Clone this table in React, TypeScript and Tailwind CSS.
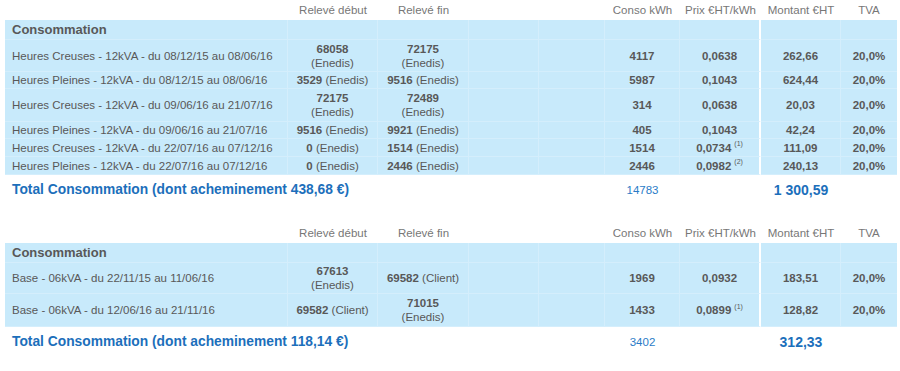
import React from "react";

interface Reading {
  value: string;
  src: string;
  stacked?: boolean;
}

interface Row {
  label: string;
  debut: Reading;
  fin: Reading;
  conso: string;
  prix: string;
  note?: string;
  montant: string;
  tva: string;
  height: string;
}

interface Section {
  rows: Row[];
  acheminement: string;
  totalConso: string;
  totalMontant: string;
}

const grid =
  "grid grid-cols-[283px_90px_91px_70px_66px_75px_81px_80px_56px]";

const sections: Section[] = [
  {
    acheminement: "438,68",
    totalConso: "14783",
    totalMontant: "1 300,59",
    rows: [
      {
        label: "Heures Creuses - 12kVA - du 08/12/15 au 08/06/16",
        debut: { value: "68058", src: "(Enedis)", stacked: true },
        fin: { value: "72175", src: "(Enedis)", stacked: true },
        conso: "4117",
        prix: "0,0638",
        montant: "262,66",
        tva: "20,0%",
        height: "h-[32px]",
      },
      {
        label: "Heures Pleines - 12kVA - du 08/12/15 au 08/06/16",
        debut: { value: "3529", src: "(Enedis)" },
        fin: { value: "9516", src: "(Enedis)" },
        conso: "5987",
        prix: "0,1043",
        montant: "624,44",
        tva: "20,0%",
        height: "h-[17px]",
      },
      {
        label: "Heures Creuses - 12kVA - du 09/06/16 au 21/07/16",
        debut: { value: "72175", src: "(Enedis)", stacked: true },
        fin: { value: "72489", src: "(Enedis)", stacked: true },
        conso: "314",
        prix: "0,0638",
        montant: "20,03",
        tva: "20,0%",
        height: "h-[33px]",
      },
      {
        label: "Heures Pleines - 12kVA - du 09/06/16 au 21/07/16",
        debut: { value: "9516", src: "(Enedis)" },
        fin: { value: "9921", src: "(Enedis)" },
        conso: "405",
        prix: "0,1043",
        montant: "42,24",
        tva: "20,0%",
        height: "h-[17px]",
      },
      {
        label: "Heures Creuses - 12kVA - du 22/07/16 au 07/12/16",
        debut: { value: "0", src: "(Enedis)" },
        fin: { value: "1514", src: "(Enedis)" },
        conso: "1514",
        prix: "0,0734",
        note: "(1)",
        montant: "111,09",
        tva: "20,0%",
        height: "h-[18px]",
      },
      {
        label: "Heures Pleines - 12kVA - du 22/07/16 au 07/12/16",
        debut: { value: "0", src: "(Enedis)" },
        fin: { value: "2446", src: "(Enedis)" },
        conso: "2446",
        prix: "0,0982",
        note: "(2)",
        montant: "240,13",
        tva: "20,0%",
        height: "h-[18px]",
      },
    ],
  },
  {
    acheminement: "118,14",
    totalConso: "3402",
    totalMontant: "312,33",
    rows: [
      {
        label: "Base - 06kVA - du 22/11/15 au 11/06/16",
        debut: { value: "67613", src: "(Enedis)", stacked: true },
        fin: { value: "69582", src: "(Client)" },
        conso: "1969",
        prix: "0,0932",
        montant: "183,51",
        tva: "20,0%",
        height: "h-[31px]",
      },
      {
        label: "Base - 06kVA - du 12/06/16 au 21/11/16",
        debut: { value: "69582", src: "(Client)" },
        fin: { value: "71015", src: "(Enedis)", stacked: true },
        conso: "1433",
        prix: "0,0899",
        note: "(1)",
        montant: "128,82",
        tva: "20,0%",
        height: "h-[33px]",
      },
    ],
  },
];

const cell =
  "flex items-center justify-center bg-[#c8eafb] border-r border-b border-[#d4eefc]";

const ReadingCell = ({ reading }: { reading: Reading }) => (
  <div className={`${cell} text-center leading-[14px]`}>
    {reading.stacked ? (
      <div className="flex flex-col">
        <span className="font-bold">{reading.value}</span>
        <span>{reading.src}</span>
      </div>
    ) : (
      <span>
        <span className="font-bold">{reading.value}</span> {reading.src}
      </span>
    )}
  </div>
);

const Table = ({ section, className }: { section: Section; className?: string }) => (
  <div className={`px-[5px] ${className ?? ""}`}>
    <div className={`${grid} h-[20px] items-center text-center text-[#777]`}>
      <div />
      <div>Relevé début</div>
      <div>Relevé fin</div>
      <div />
      <div />
      <div>Conso kWh</div>
      <div>Prix €HT/kWh</div>
      <div>Montant €HT</div>
      <div>TVA</div>
    </div>

    <div className={`${grid} text-[#585858]`}>
      <div className={`${cell} h-[20px] !justify-start pl-[7px] text-[13px] font-bold`}>
        Consommation
      </div>
      <div className={cell} />
      <div className={cell} />
      <div className={cell} />
      <div className={cell} />
      <div className={cell} />
      <div className={`${cell} !border-r-2 !border-r-white`} />
      <div className={cell} />
      <div className={`${cell} !border-r-0`} />

      {section.rows.map((row, i) => (
        <React.Fragment key={i}>
          <div className={`${cell} ${row.height} !justify-start pl-[7px]`}>
            {row.label}
          </div>
          <ReadingCell reading={row.debut} />
          <ReadingCell reading={row.fin} />
          <div className={cell} />
          <div className={cell} />
          <div className={`${cell} font-bold`}>{row.conso}</div>
          <div className={`${cell} !border-r-2 !border-r-white font-bold`}>
            {row.prix}
            {row.note && (
              <sup className="ml-[3px] text-[7px] font-normal">{row.note}</sup>
            )}
          </div>
          <div className={`${cell} font-bold`}>{row.montant}</div>
          <div className={`${cell} !border-r-0 font-bold`}>{row.tva}</div>
        </React.Fragment>
      ))}
    </div>

    <div className={`${grid} h-[30px] items-center text-[#1c6fbb]`}>
      <div className="col-span-5 pl-[7px] text-[13.8px] font-bold">
        Total Consommation (dont acheminement {section.acheminement} €)
      </div>
      <div className="text-center text-[#2a7cc7]">{section.totalConso}</div>
      <div />
      <div className="text-center text-[14px] font-bold">
        {section.totalMontant}
      </div>
      <div />
    </div>
  </div>
);

export default function App() {
  return (
    <div className="w-[900px] h-[371px] bg-white text-[11.5px] leading-[14px] font-['Liberation_Sans',Arial,sans-serif]">
      <Table section={sections[0]} />
      <Table section={sections[1]} className="mt-[18px]" />
    </div>
  );
}
